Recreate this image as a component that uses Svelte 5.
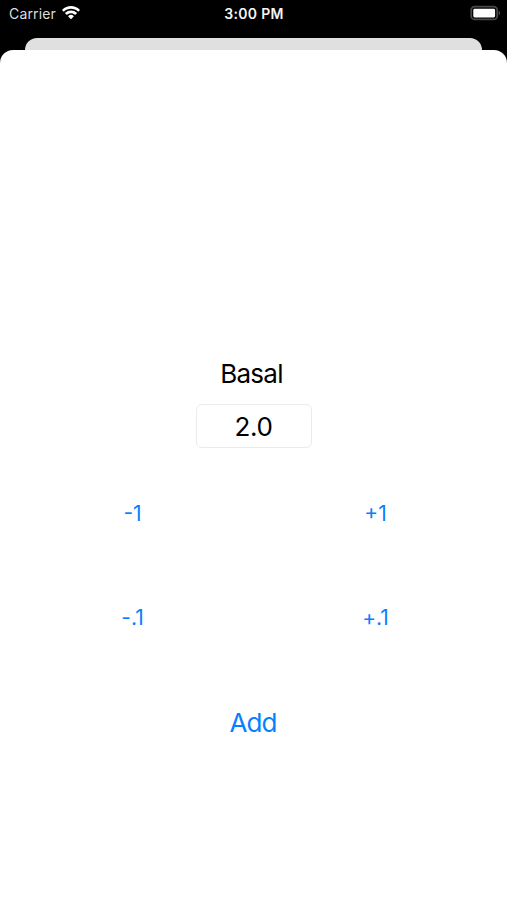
<script>
  let value = $state(2);
  const step = (d) => { value = Math.max(0, Math.round((value + d) * 10) / 10); };
</script>

<div class="screen">
  <header class="status">
    <div class="carrier"><span>Carrier</span>
      <svg width="20" height="14" viewBox="0 0 20 14" fill="#fff"><path d="M10 2.8c2.7 0 5.1 1 7 2.8.1.1.4.1.5 0l1.3-1.4a.4.4 0 0 0 0-.5C13.9-1.1 6.100-1.1 1.200 3.700a.4.4 0 0 0 0 .5l1.300 1.400c.1.1.4.1.5 0 1.900-1.800 4.300-2.800 7-2.800z"/><path d="M10 7.200c1.500 0 2.900.6 4 1.500.2.100.4.100.5 0l1.400-1.400c.1-.2.1-.4 0-.5a8.600 8.600 0 0 0-11.800 0c-.1.100-.1.300 0 .5l1.400 1.400c.1.100.3.100.5 0 1.100-.9 2.500-1.500 4-1.500z"/><path d="M12.700 9.900c.2.200.2.400 0 .5l-2.400 2.500c-.2.200-.4.200-.6 0l-2.400-2.500c-.2-.1-.2-.3 0-.5a4.200 4.200 0 0 1 5.400 0z"/></svg>
    </div>
    <time>3:00 PM</time>
    <div class="power"><svg width="31" height="16" viewBox="0 0 31 16"><rect x="1.200" y="1.600" width="26" height="12.800" rx="3.500" fill="none" stroke="#484848" stroke-width="1.800"/><rect x="3.300" y="3.700" width="21.800" height="8.700" rx="1.300" fill="#fff"/><path d="M28.700 5.600c2 1 2 4 0 5z" fill="#484848"/></svg></div>
  </header>
  <div class="behind"></div>
  <main>
    <h1>Basal</h1>
    <div class="field">{value.toFixed(1)}</div>
    <div class="steps">
      <button onclick={() => step(-1)}>-1</button>
      <button onclick={() => step(1)}>+1</button>
      <button onclick={() => step(-0.1)}>-.1</button>
      <button onclick={() => step(0.1)}>+.1</button>
    </div>
    <button class="add">Add</button>
  </main>
</div>

<style>
  .screen { height: 900px; display: flex; flex-direction: column; background: #000; font-family: Inter, sans-serif; overflow: hidden; }
  .status { height: 38px; padding: 0 6px 0 9px; box-sizing: border-box; display: grid; grid-template-columns: 1fr auto 1fr; align-items: start; color: #fff; font-size: 14px; line-height: 28px; }
  .carrier { display: flex; gap: 5px; color: #ddd; letter-spacing: .15px; }
  .carrier svg { margin-top: 6px; }
  time { font-weight: 600; letter-spacing: .3px; margin-right: 2px; color: #f4f4f4; }
  .power { display: flex; justify-content: flex-end; padding-top: 5px; }
  .behind { flex: none; height: 12px; margin: 0 25px; background: #e0e0e0; border-radius: 12px 12px 0 0; }
  main { flex: 1; display: flex; flex-direction: column; align-items: center; background: #fff; border-radius: 13px 13px 0 0; }
  h1 { margin: 304px 4px 0 0; font-size: 26px; line-height: 40px; font-weight: 400; letter-spacing: -.7px; }
  .field { box-sizing: border-box; width: 116px; height: 44px; margin-top: 10px; border: 1px solid #ebebeb; border-radius: 6px; text-align: center; font-size: 26px; line-height: 43px; letter-spacing: -.3px; }
  .steps { width: 486px; margin: 14px 0 0 1px; display: grid; grid-template-columns: 1fr 1fr; grid-auto-rows: 103.5px; }
  button { border: 0; padding: 0; background: none; color: #087fff; font: 400 21px Inter, sans-serif; }
  .add { margin: 34px 1px 0 0; font-size: 26px; line-height: 40px; letter-spacing: -1px; }
</style>
